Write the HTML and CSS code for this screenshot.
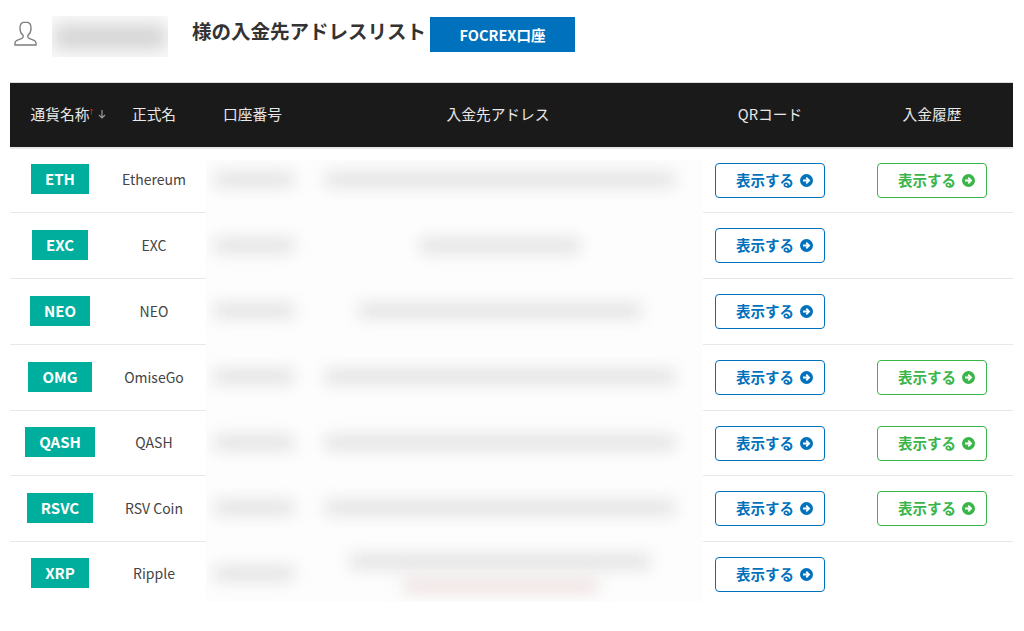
FILE: index.html
```html
<!DOCTYPE html>
<html lang="ja">
<head>
<meta charset="utf-8">
<title>入金先アドレスリスト</title>
<link rel="stylesheet" href="styles.css">
</head>
<body>
<header class="title-row">
  <svg class="user-icon" viewBox="0 0 24 26" width="23" height="25"><path d="M12 1C8.200 1 6.200 3.800 6.200 7.400c0 3 1.200 5.600 3 7.200.6.600.6 1.800 0 2.600-.8 1.200-3.400 1.800-5.600 2.800C2 20.700 1 21.500 1 23v2h22v-2c0-1.500-1-2.300-2.600-3-2.200-1-4.800-1.600-5.600-2.800-.6-.8-.6-2 0-2.600 1.800-1.600 3-4.200 3-7.200C17.800 3.800 15.800 1 12 1z" fill="none" stroke="#7d7d7d" stroke-width="1.400"/></svg>
  <div class="name-mask"><span class="name-blur"></span></div>
  <h1 class="page-title">様の入金先アドレスリスト</h1>
  <span class="account-tag">FOCREX口座</span>
</header>
<main class="table-wrap">
<table class="list">
  <colgroup><col class="c1"><col class="c2"><col class="c3"><col class="c4"><col class="c5"><col class="c6"></colgroup>
  <thead>
    <tr>
      <th>通貨名称<span class="sort"><svg class="up" viewBox="0 0 6 8" width="5" height="7"><path d="M3 8V1M.8 3.200 3 1l2.200 2.200"/></svg><svg class="down" viewBox="0 0 8 9" width="8" height="9"><path d="M4 0v8M1 5l3 3 3-3"/></svg></span></th>
      <th>正式名</th><th>口座番号</th><th>入金先アドレス</th><th>QRコード</th><th>入金履歴</th>
    </tr>
  </thead>
  <tbody>
    <tr><td><span class="coin">ETH</span></td><td>Ethereum</td><td></td><td></td><td><a class="btn blue"><span>表示する</span><svg class="arrow" viewBox="0 0 12 12"><circle cx="6" cy="6" r="6"/><path d="M2.800 6h5.200M5.800 3.400 8.400 6 5.800 8.600" class="arrow-line"/></svg></a></td><td><a class="btn green"><span>表示する</span><svg class="arrow" viewBox="0 0 12 12"><circle cx="6" cy="6" r="6"/><path d="M2.800 6h5.200M5.800 3.400 8.400 6 5.800 8.600" class="arrow-line"/></svg></a></td></tr>
    <tr class="tall"><td><span class="coin">EXC</span></td><td>EXC</td><td></td><td></td><td><a class="btn blue"><span>表示する</span><svg class="arrow" viewBox="0 0 12 12"><circle cx="6" cy="6" r="6"/><path d="M2.800 6h5.200M5.800 3.400 8.400 6 5.800 8.600" class="arrow-line"/></svg></a></td><td></td></tr>
    <tr class="tall"><td><span class="coin">NEO</span></td><td>NEO</td><td></td><td></td><td><a class="btn blue"><span>表示する</span><svg class="arrow" viewBox="0 0 12 12"><circle cx="6" cy="6" r="6"/><path d="M2.800 6h5.200M5.800 3.400 8.400 6 5.800 8.600" class="arrow-line"/></svg></a></td><td></td></tr>
    <tr class="tall"><td><span class="coin">OMG</span></td><td>OmiseGo</td><td></td><td></td><td><a class="btn blue"><span>表示する</span><svg class="arrow" viewBox="0 0 12 12"><circle cx="6" cy="6" r="6"/><path d="M2.800 6h5.200M5.800 3.400 8.400 6 5.800 8.600" class="arrow-line"/></svg></a></td><td><a class="btn green"><span>表示する</span><svg class="arrow" viewBox="0 0 12 12"><circle cx="6" cy="6" r="6"/><path d="M2.800 6h5.200M5.800 3.400 8.400 6 5.800 8.600" class="arrow-line"/></svg></a></td></tr>
    <tr><td><span class="coin">QASH</span></td><td>QASH</td><td></td><td></td><td><a class="btn blue"><span>表示する</span><svg class="arrow" viewBox="0 0 12 12"><circle cx="6" cy="6" r="6"/><path d="M2.800 6h5.200M5.800 3.400 8.400 6 5.800 8.600" class="arrow-line"/></svg></a></td><td><a class="btn green"><span>表示する</span><svg class="arrow" viewBox="0 0 12 12"><circle cx="6" cy="6" r="6"/><path d="M2.800 6h5.200M5.800 3.400 8.400 6 5.800 8.600" class="arrow-line"/></svg></a></td></tr>
    <tr class="tall"><td><span class="coin">RSVC</span></td><td>RSV Coin</td><td></td><td></td><td><a class="btn blue"><span>表示する</span><svg class="arrow" viewBox="0 0 12 12"><circle cx="6" cy="6" r="6"/><path d="M2.800 6h5.200M5.800 3.400 8.400 6 5.800 8.600" class="arrow-line"/></svg></a></td><td><a class="btn green"><span>表示する</span><svg class="arrow" viewBox="0 0 12 12"><circle cx="6" cy="6" r="6"/><path d="M2.800 6h5.200M5.800 3.400 8.400 6 5.800 8.600" class="arrow-line"/></svg></a></td></tr>
    <tr class="last"><td><span class="coin">XRP</span></td><td>Ripple</td><td></td><td></td><td><a class="btn blue"><span>表示する</span><svg class="arrow" viewBox="0 0 12 12"><circle cx="6" cy="6" r="6"/><path d="M2.800 6h5.200M5.800 3.400 8.400 6 5.800 8.600" class="arrow-line"/></svg></a></td><td></td></tr>
  </tbody>
</table>
<div class="mask">
  <div class="mask-row"><div class="acct"><i></i></div><div class="addr"><i class="full"></i></div></div>
  <div class="mask-row"><div class="acct"><i></i></div><div class="addr"><i class="short"></i></div></div>
  <div class="mask-row"><div class="acct"><i></i></div><div class="addr"><i class="mid"></i></div></div>
  <div class="mask-row"><div class="acct"><i></i></div><div class="addr"><i class="full"></i></div></div>
  <div class="mask-row"><div class="acct"><i></i></div><div class="addr"><i class="full"></i></div></div>
  <div class="mask-row"><div class="acct"><i></i></div><div class="addr"><i class="full"></i></div></div>
  <div class="mask-row"><div class="acct"><i></i></div><div class="addr"><i class="two"></i><i class="red"></i></div></div>
</div>
</main>
</body>
</html>
```
FILE: styles.css
```css
html, body { margin: 0; padding: 0; background: #fff; }
body {
  font-family: "Noto Sans CJK JP", "Noto Sans", sans-serif;
  color: #333;
  height: 631px;
  overflow: hidden;
}
.title-row {
  display: flex;
  align-items: center;
  height: 41px;
  padding: 16px 0 0 14px;
}
.user-icon { flex: none; margin: 0 15px 7px 0; }
.name-mask {
  flex: none;
  width: 116px;
  height: 41px;
  background: #fbfbfb;
  display: flex;
  align-items: center;
  justify-content: center;
  overflow: hidden;
}
.name-blur {
  flex: none;
  width: 112px;
  height: 24px;
  background: #d2d2d2;
  filter: blur(9px);
}
.page-title {
  margin: 0 4px 12px 24px;
  font-size: 19.500px;
  line-height: 30px;
  font-weight: 700;
  color: #333;
  white-space: nowrap;
}
.account-tag {
  flex: none;
  width: 145px;
  height: 35px;
  margin-bottom: 4px;
  background: #0071bc;
  color: #fff;
  font-size: 14.500px;
  font-weight: 700;
  line-height: 35px;
  text-align: center;
}
.table-wrap {
  position: relative;
  margin: 25px 11px 0 10px;
}
.list {
  width: 1003px;
  table-layout: fixed;
  border-collapse: collapse;
}
.c1 { width: 100px; }
.c2 { width: 88px; }
.c3 { width: 109px; }
.c4 { width: 382px; }
.c5 { width: 162px; }
.c6 { width: 162px; }
.list th {
  box-sizing: border-box;
  height: 65px;
  padding: 0 0 3px;
  background: #1a1a1a;
  color: #e8e8e8;
  font-size: 14.700px;
  font-weight: 400;
  text-align: center;
  border-top: 1px solid #ddd;
  border-bottom: 2px solid #e8e8e8;
}
.list td {
  box-sizing: border-box;
  height: 65px;
  padding: 0;
  text-align: center;
  font-size: 14px;
  color: #444;
  border-bottom: 1px solid #e8e8e8;
}
.list .tall td { height: 66px; }
.list td:nth-child(-n+2) { padding-bottom: 2px; }
.list .last td { border-bottom: 0; }
.sort {
  position: relative;
  display: inline-block;
  width: 18px;
  height: 12px;
  margin-right: -18px;
}
.sort svg { position: absolute; fill: none; stroke-width: 1.200; }
.sort .up { left: 0; top: 0; stroke: #c01818; }
.sort .down { left: 9px; top: 2px; stroke: #9a9a9a; }
.coin {
  display: inline-block;
  padding: 0 14px;
  height: 30px;
  line-height: 30px;
  background: #00ae9e;
  color: #fff;
  font-size: 15px;
  font-weight: 700;
}
.btn {
  display: inline-flex;
  align-items: center;
  justify-content: center;
  gap: 6px;
  box-sizing: border-box;
  width: 110px;
  height: 35px;
  padding-left: 9px;
  border: 1px solid;
  border-radius: 4px;
  font-size: 14.500px;
  font-weight: 700;
  background: #fff;
}
.btn span { padding-bottom: 2px; }
.arrow { width: 13px; height: 13px; flex: none; }
.arrow-line { fill: none; stroke: #fff; stroke-width: 1.700; }
.blue { color: #0071bc; border-color: #0071bc; }
.blue .arrow circle { fill: #0071bc; }
.green { color: #39b54a; border-color: #39b54a; }
.green .arrow circle { fill: #39b54a; }
.mask {
  position: absolute;
  left: 196px;
  top: 78px;
  width: 497px;
  height: 442px;
  background: #fdfdfd;
  display: grid;
  grid-template-rows: repeat(7, 65.600px);
  overflow: hidden;
}
.mask-row {
  display: grid;
  grid-template-columns: 96px 1fr;
  align-items: center;
  position: relative;
  top: -13px;
}
.acct, .addr {
  display: flex;
  flex-direction: column;
  align-items: center;
  gap: 9px;
}
.addr { padding-right: 5px; }
.mask i {
  display: block;
  height: 15px;
  background: #e2e2e2;
  filter: blur(8px);
}
.acct i { width: 80px; }
.addr i.full { width: 350px; }
.addr i.short { width: 160px; }
.addr i.mid { width: 282px; }
.addr i.two { width: 300px; }
.addr i.red { width: 195px; background: #efe2e2; }
```
